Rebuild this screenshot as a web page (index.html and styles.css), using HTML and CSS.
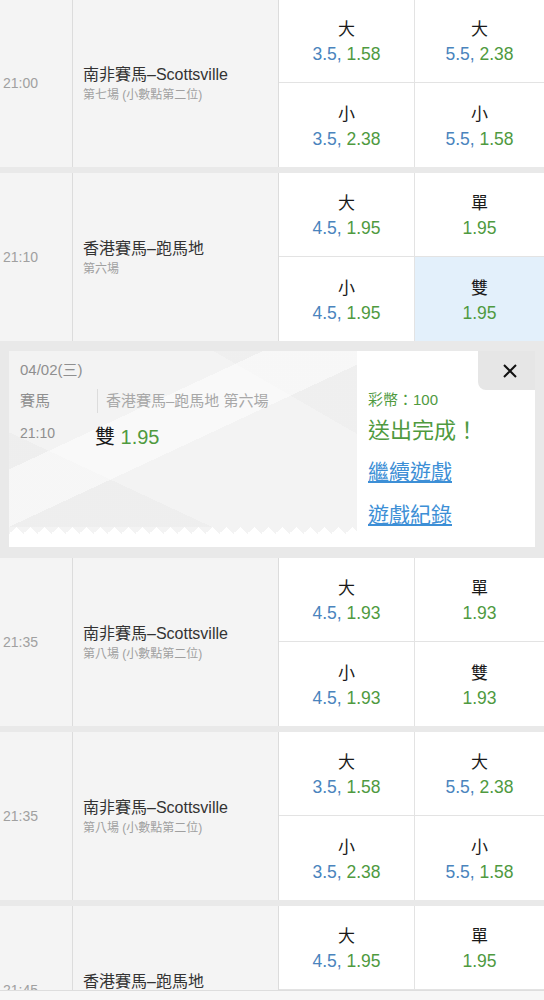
FILE: index.html
```html
<!DOCTYPE html>
<html>
<head>
    <meta charset="utf-8">
    <title>賽馬</title>
    <link rel="stylesheet" href="styles.css">
</head>
<body>
    <div class="list">
        <div class="race">
            <div class="time">21:00</div>
            <div class="name">
                <div class="title">南非賽馬–Scottsville</div>
                <div class="sub">第七場 (小數點第二位)</div>
            </div>
            <div class="odd"><span class="pick">大</span><span class="num"><span class="line">3.5,</span> <span class="price">1.58</span></span></div>
            <div class="odd"><span class="pick">大</span><span class="num"><span class="line">5.5,</span> <span class="price">2.38</span></span></div>
            <div class="odd"><span class="pick">小</span><span class="num"><span class="line">3.5,</span> <span class="price">2.38</span></span></div>
            <div class="odd"><span class="pick">小</span><span class="num"><span class="line">5.5,</span> <span class="price">1.58</span></span></div>
        </div>

        <div class="race">
            <div class="time">21:10</div>
            <div class="name">
                <div class="title">香港賽馬–跑馬地</div>
                <div class="sub">第六場</div>
            </div>
            <div class="odd"><span class="pick">大</span><span class="num"><span class="line">4.5,</span> <span class="price">1.95</span></span></div>
            <div class="odd"><span class="pick">單</span><span class="num"><span class="price">1.95</span></span></div>
            <div class="odd"><span class="pick">小</span><span class="num"><span class="line">4.5,</span> <span class="price">1.95</span></span></div>
            <div class="odd selected"><span class="pick">雙</span><span class="num"><span class="price">1.95</span></span></div>
        </div>

        <div class="popup">
            <div class="ticket">
                <div class="slip">
                    <div class="slip-body">
                        <div class="date">04/02(三)</div>
                        <div class="slip-row">
                            <span class="label">賽馬</span>
                            <span class="event">香港賽馬–跑馬地 第六場</span>
                        </div>
                        <div class="slip-row pick-row">
                            <span class="label small">21:10</span>
                            <span class="bet">雙 <span class="price">1.95</span></span>
                        </div>
                    </div>
                    <div class="zigzag"></div>
                </div>
                <div class="result">
                    <div class="close">
                        <svg width="16" height="16" viewBox="0 0 16 16"><path d="M2 2L14 14M14 2L2 14" stroke="#111" stroke-width="2" fill="none"/></svg>
                    </div>
                    <div class="coins">彩幣：100</div>
                    <div class="done">送出完成！</div>
                    <a class="link" href="#">繼續遊戲</a>
                    <a class="link" href="#">遊戲紀錄</a>
                </div>
            </div>
        </div>

        <div class="race">
            <div class="time">21:35</div>
            <div class="name">
                <div class="title">南非賽馬–Scottsville</div>
                <div class="sub">第八場 (小數點第二位)</div>
            </div>
            <div class="odd"><span class="pick">大</span><span class="num"><span class="line">4.5,</span> <span class="price">1.93</span></span></div>
            <div class="odd"><span class="pick">單</span><span class="num"><span class="price">1.93</span></span></div>
            <div class="odd"><span class="pick">小</span><span class="num"><span class="line">4.5,</span> <span class="price">1.93</span></span></div>
            <div class="odd"><span class="pick">雙</span><span class="num"><span class="price">1.93</span></span></div>
        </div>

        <div class="race">
            <div class="time">21:35</div>
            <div class="name">
                <div class="title">南非賽馬–Scottsville</div>
                <div class="sub">第八場 (小數點第二位)</div>
            </div>
            <div class="odd"><span class="pick">大</span><span class="num"><span class="line">3.5,</span> <span class="price">1.58</span></span></div>
            <div class="odd"><span class="pick">大</span><span class="num"><span class="line">5.5,</span> <span class="price">2.38</span></span></div>
            <div class="odd"><span class="pick">小</span><span class="num"><span class="line">3.5,</span> <span class="price">2.38</span></span></div>
            <div class="odd"><span class="pick">小</span><span class="num"><span class="line">5.5,</span> <span class="price">1.58</span></span></div>
        </div>

        <div class="race">
            <div class="time">21:45</div>
            <div class="name">
                <div class="title">香港賽馬–跑馬地</div>
                <div class="sub">第七場</div>
            </div>
            <div class="odd"><span class="pick">大</span><span class="num"><span class="line">4.5,</span> <span class="price">1.95</span></span></div>
            <div class="odd"><span class="pick">單</span><span class="num"><span class="price">1.95</span></span></div>
            <div class="odd"><span class="pick">小</span><span class="num"><span class="line">4.5,</span> <span class="price">1.95</span></span></div>
            <div class="odd"><span class="pick">雙</span><span class="num"><span class="price">1.95</span></span></div>
        </div>
    </div>
    <div class="footer"></div>
</body>
</html>
```

FILE: styles.css
```css
* {
    box-sizing: border-box;
}
body {
    margin: 0;
    background: #e9e9e9;
    font-family: "Liberation Sans", "Noto Sans CJK TC", sans-serif;
    color: #222;
    overflow: hidden;
}
.list {
    display: flex;
    flex-direction: column;
    gap: 6px;
    margin-top: -1px;
}
.race {
    display: grid;
    grid-template-columns: 73px 206px 135px 130px;
    grid-template-rows: 84px 84px;
    background: #fff;
    flex-shrink: 0;
}
.time {
    grid-row: span 2;
    display: flex;
    align-items: center;
    padding-left: 3px;
    background: #f4f4f4;
    border-right: 1px solid #dcdcdc;
    font-size: 14px;
    color: #a0a0a0;
}
.name {
    grid-row: span 2;
    display: flex;
    flex-direction: column;
    justify-content: center;
    padding-left: 10px;
    background: #f4f4f4;
    border-right: 1px solid #dcdcdc;
}
.title {
    font-size: 16px;
    line-height: 22px;
    color: #333;
}
.sub {
    font-size: 12px;
    line-height: 16px;
    color: #a0a0a0;
    margin-top: 1px;
}
.odd {
    display: flex;
    flex-direction: column;
    align-items: center;
    justify-content: center;
    padding-top: 4px;
}
.odd:nth-child(3),
.odd:nth-child(4) {
    border-bottom: 1px solid #e3e3e3;
}
.odd:nth-child(4),
.odd:nth-child(6) {
    border-left: 1px solid #e3e3e3;
}
.odd.selected {
    background: #e3f0fb;
}
.pick {
    font-size: 17px;
    line-height: 24px;
    color: #1a1a1a;
}
.num {
    font-size: 17.5px;
    line-height: 25px;
}
.line {
    color: #4a84bd;
}
.price {
    color: #4f9a3f;
}

/* ticket popup */
.popup {
    padding: 4px 9px 5px;
    flex-shrink: 0;
}
.ticket {
    display: flex;
    height: 196px;
    background: #fff;
}
.slip {
    width: 348px;
    display: flex;
    flex-direction: column;
}
.slip-body {
    height: 176px;
    padding: 9px 11px 0;
    background:
        linear-gradient(155deg, transparent 35%, rgba(255,255,255,0.5) 35%, rgba(255,255,255,0.5) 52%, transparent 52%),
        linear-gradient(25deg, rgba(0,0,0,0.018) 28%, transparent 28%),
        linear-gradient(210deg, rgba(0,0,0,0.015) 22%, transparent 22%),
        #f3f3f3;
}
.zigzag {
    height: 7px;
    background-image:
        linear-gradient(135deg, #f3f3f3 25%, transparent 25%),
        linear-gradient(225deg, #f3f3f3 25%, transparent 25%);
    background-size: 14px 14px;
}
.date {
    font-size: 15px;
    line-height: 20px;
    color: #8f8f8f;
}
.slip-row {
    display: flex;
    align-items: center;
    margin-top: 9px;
}
.pick-row {
    align-items: flex-start;
    margin-top: 8px;
}
.label {
    width: 77px;
    font-size: 15px;
    line-height: 24px;
    color: #8f8f8f;
}
.label.small {
    width: 75px;
    font-size: 14px;
}
.event {
    border-left: 1px solid #dcdcdc;
    padding-left: 8px;
    font-size: 15px;
    line-height: 24px;
    color: #a8a8a8;
}
.bet {
    font-size: 20px;
    line-height: 28px;
    color: #1a1a1a;
    margin-top: 2px;
}
.result {
    flex: 1;
    display: flex;
    flex-direction: column;
    align-items: flex-start;
    padding-left: 11px;
}
.close {
    align-self: flex-end;
    width: 57px;
    height: 39px;
    background: #e6e6e6;
    border-bottom-left-radius: 8px;
    display: flex;
    align-items: center;
    justify-content: center;
    padding-left: 7px;
}
.coins {
    font-size: 15px;
    line-height: 20px;
    color: #4f9a3f;
}
.done {
    font-size: 22px;
    line-height: 30px;
    color: #4f9a3f;
    margin-top: 6px;
}
.link {
    font-size: 21px;
    line-height: 26px;
    color: #3d8fd6;
    text-decoration: underline;
    margin-top: 13px;
}
.link + .link {
    margin-top: 17px;
}
.footer {
    position: fixed;
    left: 0;
    right: 0;
    bottom: 0;
    height: 10px;
    background: #f7f7f7;
    border-top: 1px solid #dedede;
}
```
